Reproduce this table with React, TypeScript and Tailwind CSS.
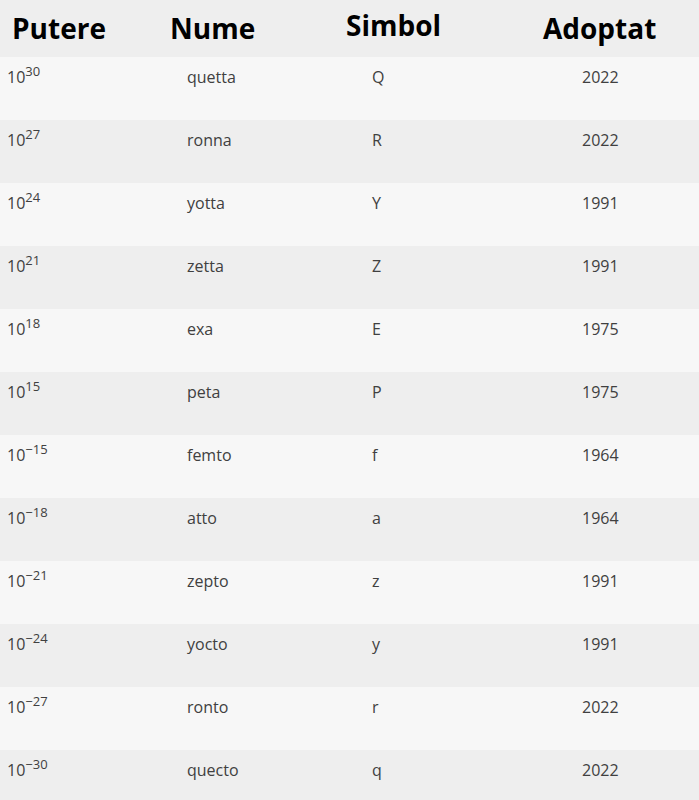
import React from "react";

type Row = { base: string; exp: string; name: string; sym: string; year: string };

const rows: Row[] = [
  { base: "10", exp: "30", name: "quetta", sym: "Q", year: "2022" },
  { base: "10", exp: "27", name: "ronna", sym: "R", year: "2022" },
  { base: "10", exp: "24", name: "yotta", sym: "Y", year: "1991" },
  { base: "10", exp: "21", name: "zetta", sym: "Z", year: "1991" },
  { base: "10", exp: "18", name: "exa", sym: "E", year: "1975" },
  { base: "10", exp: "15", name: "peta", sym: "P", year: "1975" },
  { base: "10", exp: "\u221215", name: "femto", sym: "f", year: "1964" },
  { base: "10", exp: "\u221218", name: "atto", sym: "a", year: "1964" },
  { base: "10", exp: "\u221221", name: "zepto", sym: "z", year: "1991" },
  { base: "10", exp: "\u221224", name: "yocto", sym: "y", year: "1991" },
  { base: "10", exp: "\u221227", name: "ronto", sym: "r", year: "2022" },
  { base: "10", exp: "\u221230", name: "quecto", sym: "q", year: "2022" },
];

export default function App() {
  return (
    <div
      className="w-[699px] h-[800px] overflow-hidden bg-[#f7f7f7]"
      style={{ fontFamily: '"Open Sans", "Noto Sans", sans-serif' }}
    >
      <div className="flex h-[57px] bg-[#eeeeee] pt-[9px] text-[28px] leading-[38px] font-bold text-black">
        <div className="w-[170px] pl-[12px]">Putere</div>
        <div className="w-[176px]">Nume</div>
        <div className="w-[197px] -mt-[3px]">Simbol</div>
        <div>Adoptat</div>
      </div>
      {rows.map((r, i) => (
        <div
          key={i}
          className={`flex h-[63px] pt-[8px] text-[16px] leading-[24px] text-[#404040] ${
            i % 2 === 0 ? "bg-[#f7f7f7]" : "bg-[#eeeeee]"
          }`}
        >
          <div className="w-[187px] pl-[7px]">
            {r.base}
            <span className="relative -top-[7px] text-[13px] leading-none">{r.exp}</span>
          </div>
          <div className="w-[185px]">{r.name}</div>
          <div className="w-[210px]">{r.sym}</div>
          <div>{r.year}</div>
        </div>
      ))}
    </div>
  );
}
